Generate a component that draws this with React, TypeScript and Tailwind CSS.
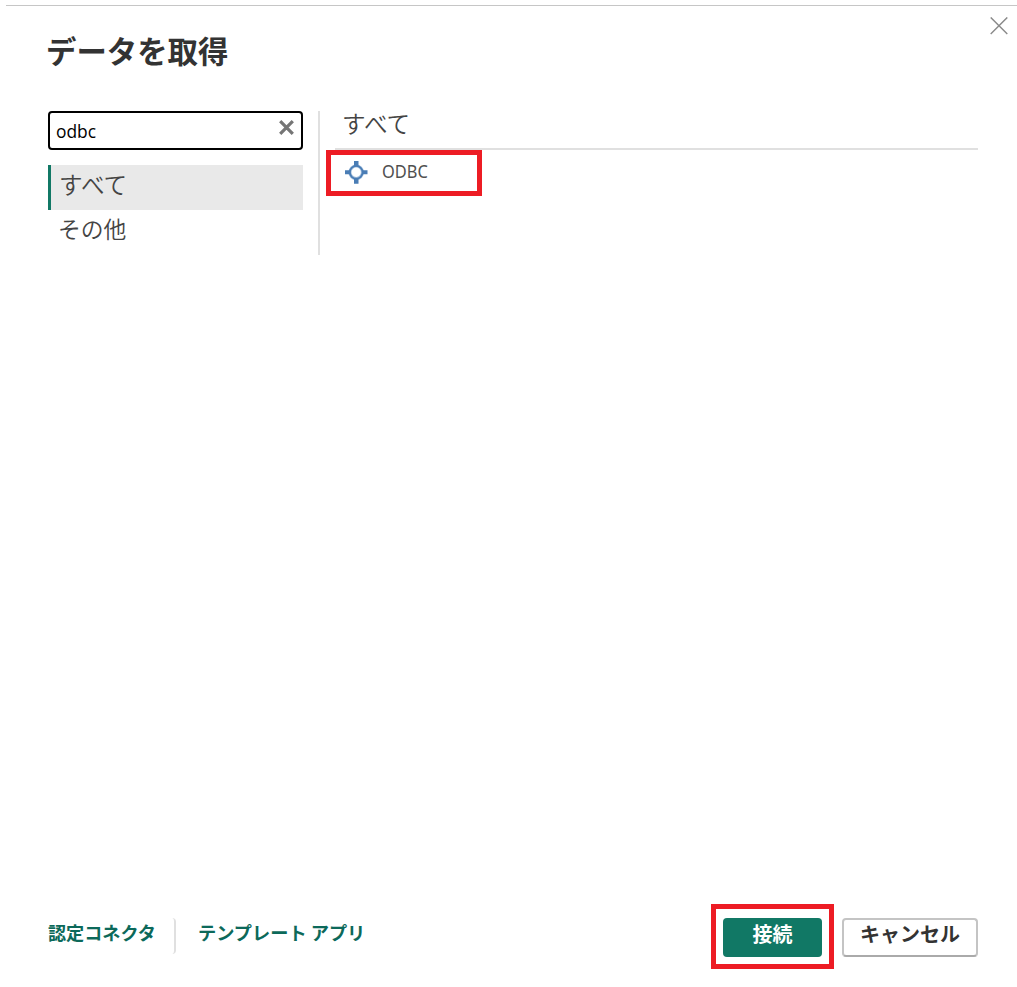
import { useState } from "react";

const categories = ["すべて", "その他"];

function CloseIcon() {
  return (
    <svg width="18" height="18" viewBox="0 0 18 18" fill="none" stroke="#8a8a8a" strokeWidth="1.4">
      <path d="M0.7 0.4 17.3 17M17.3 0.4 0.7 17" />
    </svg>
  );
}

function ClearIcon() {
  return (
    <svg width="15" height="15" viewBox="0 0 15 15" fill="none" stroke="#757575" strokeWidth="3.2">
      <path d="M1.2 1.2 13.8 13.8M13.8 1.2 1.2 13.8" />
    </svg>
  );
}

function OdbcIcon() {
  return (
    <svg width="24" height="24" viewBox="0 0 24 24">
      <circle cx="12.2" cy="12.3" r="6.3" fill="#fff" stroke="#a9c3df" strokeWidth="3.2" />
      <circle cx="12.2" cy="12.3" r="6.4" fill="none" stroke="#4a7db5" strokeWidth="1.8" />
      <path d="M10 1h4.500v5.500h-4.500zM10 18.300h4.500v5.500h-4.500zM1 10.200h5.500v4h-5.500zM18 10.200h5.500v4h-5.500z" fill="#4a7db5" />
    </svg>
  );
}

export default function App() {
  const [query, setQuery] = useState("odbc");
  return (
    <div className="flex h-[987px] w-[1017px] flex-col overflow-hidden bg-white pt-[5px] font-['Noto_Sans_CJK_JP',sans-serif] text-[#333]">
      <header className="ml-[6px] flex h-[106px] items-start justify-between border-t border-[#c6c6c6] pl-[40px] pr-[9px]">
        <h1 className="mt-[22px] text-[30.4px] font-bold leading-[44px]">データを取得</h1>
        <button aria-label="閉じる" className="mt-[11px]">
          <CloseIcon />
        </button>
      </header>

      <main className="flex flex-1 items-start pl-[48px] pr-[39px]">
        <aside className="w-[255px]">
          <div className="flex h-[39px] items-center rounded-[4px] border-2 border-black pl-[6px] pr-[7px]">
            <input
              value={query}
              onChange={(e) => setQuery(e.target.value)}
              className="min-w-0 flex-1 font-['Open_Sans','Noto_Sans_CJK_JP',sans-serif] text-[17.4px] leading-[24px] text-black outline-none"
            />
            <button aria-label="クリア" className="mb-[6px]" onClick={() => setQuery("")}>
              <ClearIcon />
            </button>
          </div>
          <nav className="mt-[15px] text-[#444]">
            {categories.map((name, i) => (
              <div
                key={name}
                className={
                  i === 0
                    ? "h-[45px] border-l-[3px] border-[#117865] bg-[#e9e9e9] pl-[8px] text-[23.6px] font-[350] leading-[38px]"
                    : "h-[45px] border-l-[3px] border-transparent pl-[7px] text-[22.8px] font-[350] leading-[38px]"
                }
              >
                {name}
              </div>
            ))}
          </nav>
        </aside>

        <section className="ml-[15px] flex h-[144px] flex-1 border-l-2 border-[#e0e0e0] pl-[6px]">
          <div className="flex-1">
            <h2 className="ml-[9px] h-[39px] border-b-2 border-[#e0e0e0] pl-[7px] text-[23.6px] font-[350] leading-[24px] text-[#444]">
              すべて
            </h2>
            <div className="flex h-[46px] w-[156px] items-start border-[5px] border-[#ed1c24] pl-[13px] pt-[5px]">
              <OdbcIcon />
              <span className="ml-[14px] mt-[-1px] origin-left scale-x-[0.91] font-['Noto_Sans',sans-serif] text-[18px] font-normal leading-[24px] text-[#505050]">
                ODBC
              </span>
            </div>
          </div>
        </section>
      </main>

      <footer className="flex h-[83px] items-start pl-[48px] pr-[39px] font-bold">
        <a className="mt-[15px] w-[108px] whitespace-nowrap text-[18.1px] leading-[26px] text-[#0c695a]">認定コネクタ</a>
        <div className="ml-[16px] mt-[14px] h-[36px] w-[4px] rounded-r-[4px] border-r-2 border-[#e0e0e0]" />
        <a className="ml-[22px] mt-[15px] whitespace-nowrap text-[18.2px] leading-[26px] text-[#0c695a]">テンプレート アプリ</a>
        <div className="ml-auto h-[65px] w-[123px] border-[5px] border-[#ed1c24] px-[7px] py-[9px]">
          <button className="block h-[39px] w-[99px] rounded-[4px] bg-[#117865] pb-[8px] text-[20px] leading-[31px] text-white">接続</button>
        </div>
        <button className="ml-[8px] mt-[14px] h-[39px] w-[136px] rounded-[4px] border-2 border-[#c4c4c4] border-b-[#aaa] pb-[8px] text-[20px] leading-[27px]">
          キャンセル
        </button>
      </footer>
    </div>
  );
}
